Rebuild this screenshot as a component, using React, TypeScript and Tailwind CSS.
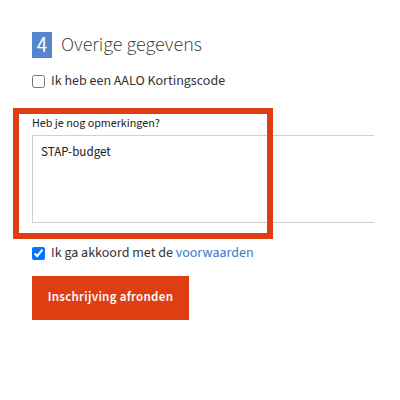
import React from 'react';

export default function App() {
  return (
    <div className="relative h-[400px] w-[400px] overflow-hidden bg-white font-['Source_Sans_3','Lato',sans-serif] text-[#333]">
      <div className="pl-8 pt-8">
        <div className="flex h-[26px] items-center gap-[9px]">
          <span className="flex h-[26px] w-5 items-center justify-center bg-[#5585cc] text-[21px] leading-none text-white">
            4
          </span>
          <h2 className="text-[20px] font-light leading-none text-[#333]">Overige gegevens</h2>
        </div>

        <label className="mt-4 flex h-[14px] items-center gap-[6px] text-[14px] leading-none">
          <input type="checkbox" className="m-0 h-[13px] w-[13px]" />
          <span>Ik heb een AALO Kortingscode</span>
        </label>

        <div className="mt-[29px]">
          <div className="text-[12px] leading-[14px] text-[#222]">Heb je nog opmerkingen?</div>
          <textarea
            defaultValue="STAP-budget"
            className="mt-[4px] block h-[88px] w-[342px] resize-none border border-r-0 border-[#d0d0d0] px-2 py-[8px] text-[13px] leading-[16px] text-[#222] outline-none"
          />
        </div>

        <label className="mt-[23px] flex h-[14px] items-center gap-[6px] text-[14px] leading-none">
          <input type="checkbox" defaultChecked className="m-0 h-[13px] w-[13px] accent-[#0075ff]" />
          <span>
            Ik ga akkoord met de <a className="text-[#3b78c9]">voorwaarden</a>
          </span>
        </label>

        <button className="mt-[16px] flex h-[44px] w-[157px] items-center justify-center bg-[#de3e12] text-[13px] font-semibold tracking-[0.3px] text-white">
          Inschrijving afronden
        </button>
      </div>

      <div className="pointer-events-none absolute left-[13px] top-[108px] h-[131px] w-[260px] border-[6px] border-[#de3e12]" />
    </div>
  );
}
